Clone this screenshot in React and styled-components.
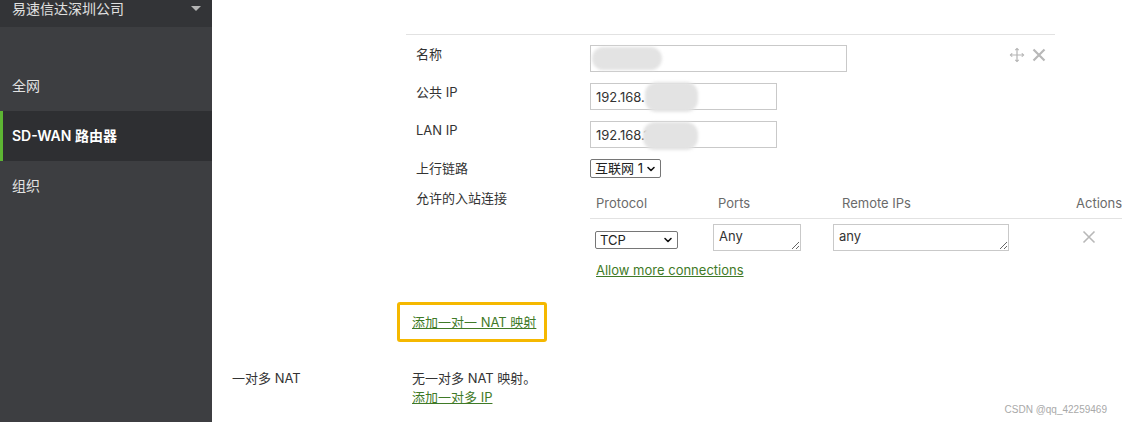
import React from 'react'
import styled, { createGlobalStyle } from 'styled-components'
import { ChevronDown } from 'lucide-react'

const Global = createGlobalStyle`
  html, body {
    margin: 0;
    padding: 0;
    background: #fff;
  }
  body {
    font-family: 'Inter', 'Noto Sans CJK SC', sans-serif;
    font-size: 13px;
    color: #333;
  }
`

function Dropdown({ w, h, value }) {
  return (
    <SelectWrap>
      <Select $w={w} $h={h}>
        <option>{value}</option>
      </Select>
      <Chevron><ChevronDown size={12} strokeWidth={3.2} /></Chevron>
    </SelectWrap>
  )
}

function App() {
  return (
    <Page>
      <Global />
      <Sidebar>
        <OrgBar>
          <span>易速信达深圳公司</span>
          <Caret />
        </OrgBar>
        <Menu>
          <MenuItem>全网</MenuItem>
          <MenuItem $active>SD-WAN 路由器</MenuItem>
          <MenuItem>组织</MenuItem>
        </Menu>
      </Sidebar>

      <Main>
        <OneToOne>
          <div />
          <div>
            <Card>
              <Tools>
                <svg width="16" height="16" viewBox="0 0 16 16" fill="none" stroke="#b5b5b5" strokeWidth="1.2">
                  <path d="M8 1.5v13M1.5 8h13" />
                  <path d="M6.3 3.2L8 1.5l1.7 1.7M6.3 12.8L8 14.5l1.7-1.7M3.2 6.3L1.5 8l1.7 1.7M12.8 6.3L14.5 8l-1.7 1.7" />
                </svg>
                <svg width="14" height="14" viewBox="0 0 14 14" stroke="#b8b8b8" strokeWidth="2.2">
                  <path d="M1.5 1.5l11 11M12.5 1.5l-11 11" />
                </svg>
              </Tools>
              <Form>
                <Label>名称</Label>
                <Field>
                  <TextInput $w={257} defaultValue="" />
                  <Blur $l={2} $t={2} $w={70} $h={23} />
                </Field>

                <Label>公共 IP</Label>
                <Field>
                  <TextInput $w={187} defaultValue="192.168." />
                  <Blur $l={55} $t={-1} $w={53} $h={30} />
                </Field>

                <Label>LAN IP</Label>
                <Field>
                  <TextInput $w={187} defaultValue="192.168.1" />
                  <Blur $l={53} $t={1} $w={55} $h={28} />
                </Field>

                <Label>上行链路</Label>
                <div>
                  <Dropdown w={71} value="互联网 1" />
                </div>

                <Label>允许的入站连接</Label>
                <div>
                  <Table>
                    <thead>
                      <tr>
                        <Th $w={116}>Protocol</Th>
                        <Th $w={118}>Ports</Th>
                        <Th $w={228}>Remote IPs</Th>
                        <Th>Actions</Th>
                      </tr>
                    </thead>
                    <tbody>
                      <tr>
                        <Td $pl={5} $pt={12}>
                          <Dropdown w={83} h={18} value="TCP" />
                        </Td>
                        <Td $pl={1}>
                          <Area $w={88} defaultValue="Any" />
                        </Td>
                        <Td $pl={0} $ml={-3}>
                          <Area $w={176} defaultValue="any" />
                        </Td>
                        <Td $pl={12} $pt={11}>
                          <svg width="14" height="14" viewBox="0 0 14 14" stroke="#b8b8b8" strokeWidth="1.6">
                            <path d="M1.5 1.5l11 11M12.5 1.5l-11 11" />
                          </svg>
                        </Td>
                      </tr>
                    </tbody>
                  </Table>
                  <MoreLink href="#">Allow more connections</MoreLink>
                </div>
              </Form>
            </Card>
            <FocusBox>
              <Link href="#">添加一对一 NAT 映射</Link>
            </FocusBox>
          </div>
        </OneToOne>

        <NatRow>
          <span>一对多 NAT</span>
          <NatValue>
            <span>无一对多 NAT 映射。</span>
            <Link href="#">添加一对多 IP</Link>
          </NatValue>
        </NatRow>

        <Watermark>CSDN @qq_42259469</Watermark>
      </Main>
    </Page>
  )
}

export default App

const Page = styled.div`
  display: flex;
  width: 1122px;
  height: 422px;
  overflow: hidden;
`

const Sidebar = styled.aside`
  width: 212px;
  flex-shrink: 0;
  background: #3d3e41;
  color: #e4e4e4;
  font-size: 14px;
`

const OrgBar = styled.div`
  height: 27px;
  background: #333437;
  display: flex;
  justify-content: space-between;
  align-items: flex-start;
  padding: 0 11px 0 12px;
  line-height: 18px;
  color: #e0e0e0;
`

const Caret = styled.span`
  width: 0;
  height: 0;
  margin-top: 6px;
  border-left: 5px solid transparent;
  border-right: 5px solid transparent;
  border-top: 5px solid #b4b4b4;
`

const Menu = styled.ul`
  list-style: none;
  margin: 0;
  padding: 34px 0 0;
`

const MenuItem = styled.li`
  height: 50px;
  display: flex;
  align-items: center;
  padding-left: ${p => (p.$active ? '9px' : '12px')};
  padding-bottom: 2px;
  box-sizing: border-box;
  border-left: ${p => (p.$active ? '3px solid #5db533' : 'none')};
  background: ${p => (p.$active ? '#2e2f32' : 'transparent')};
  color: ${p => (p.$active ? '#fff' : '#e2e2e2')};
  font-weight: ${p => (p.$active ? 600 : 400)};
`

const Main = styled.main`
  flex: 1;
  position: relative;
  padding: 34px 0 0 20px;
  min-width: 0;
`

const OneToOne = styled.div`
  display: grid;
  grid-template-columns: 174px 1fr;
`

const Card = styled.div`
  position: relative;
  box-sizing: border-box;
  width: 649px;
  border-top: 1px solid #e2e2e2;
  padding: 10px 0 0 10px;
`

const Tools = styled.div`
  position: absolute;
  top: 12px;
  right: 9px;
  display: flex;
  align-items: center;
  gap: 7px;
`

const Form = styled.div`
  display: grid;
  grid-template-columns: 174px 1fr;
  row-gap: 11px;
  align-items: start;
`

const Label = styled.div`
  line-height: 18px;
  color: #333;
`

const Field = styled.div`
  position: relative;
  width: fit-content;
`

const TextInput = styled.input`
  box-sizing: border-box;
  display: block;
  width: ${p => p.$w}px;
  height: 27px;
  border: 1px solid #c9c9c9;
  padding: 0 5px;
  font: 13px 'Inter', 'Noto Sans CJK SC', sans-serif;
  color: #333;
  outline: none;
`

const Blur = styled.span`
  position: absolute;
  left: ${p => p.$l}px;
  top: ${p => p.$t}px;
  width: ${p => p.$w}px;
  height: ${p => p.$h}px;
  border-radius: 12px;
  background: #e3e3e3;
  filter: blur(1.5px);
`

const SelectWrap = styled.div`
  position: relative;
  width: fit-content;
`

const Select = styled.select`
  appearance: none;
  box-sizing: border-box;
  display: block;
  width: ${p => p.$w}px;
  height: ${p => p.$h || 19}px;
  padding: 0 0 0 4px;
  border: 1px solid #767676;
  border-radius: 2px;
  background: #fff;
  font: 13px 'Inter', 'Noto Sans CJK SC', sans-serif;
  line-height: 1;
  color: #222;
`

const Chevron = styled.span`
  position: absolute;
  right: 4px;
  top: 50%;
  transform: translateY(-50%);
  display: flex;
  color: #111;
  pointer-events: none;
`

const Table = styled.table`
  width: 540px;
  border-collapse: collapse;
  table-layout: fixed;
`

const Th = styled.th`
  width: ${p => (p.$w ? `${p.$w}px` : 'auto')};
  height: 28px;
  padding: 0 0 1px 6px;
  text-align: left;
  font-weight: 400;
  color: #6a6a6a;
  border-bottom: 1px solid #e2e2e2;
  white-space: nowrap;
`

const Td = styled.td`
  padding: ${p => p.$pt || 5}px 0 0 ${p => p.$pl}px;
  vertical-align: top;
  & > * {
    margin-left: ${p => p.$ml || 0}px;
  }
`

const Area = styled.textarea`
  box-sizing: border-box;
  display: block;
  width: ${p => p.$w}px;
  height: 27px;
  padding: 3px 5px;
  border: 1px solid #c9c9c9;
  font: 13px 'Inter', 'Noto Sans CJK SC', sans-serif;
  color: #333;
  outline: none;
`

const Link = styled.a`
  color: #3f7a27;
  text-decoration: underline;
  line-height: 19px;
`

const MoreLink = styled(Link)`
  display: inline-block;
  margin: 10px 0 0 6px;
`

const FocusBox = styled.div`
  width: fit-content;
  margin: 22px 0 0 -9px;
  padding: 8px 8px 7px 12px;
  border: 3px solid #f5b800;
  border-radius: 3px;
  line-height: 19px;
`

const NatRow = styled.div`
  display: grid;
  grid-template-columns: 180px 1fr;
  margin-top: 27px;
  line-height: 19px;
`

const NatValue = styled.div`
  display: flex;
  flex-direction: column;
  align-items: flex-start;
`

const Watermark = styled.div`
  position: absolute;
  right: 15px;
  bottom: 7px;
  font: 10px 'Liberation Sans', sans-serif;
  color: #a9a9a9;
`
